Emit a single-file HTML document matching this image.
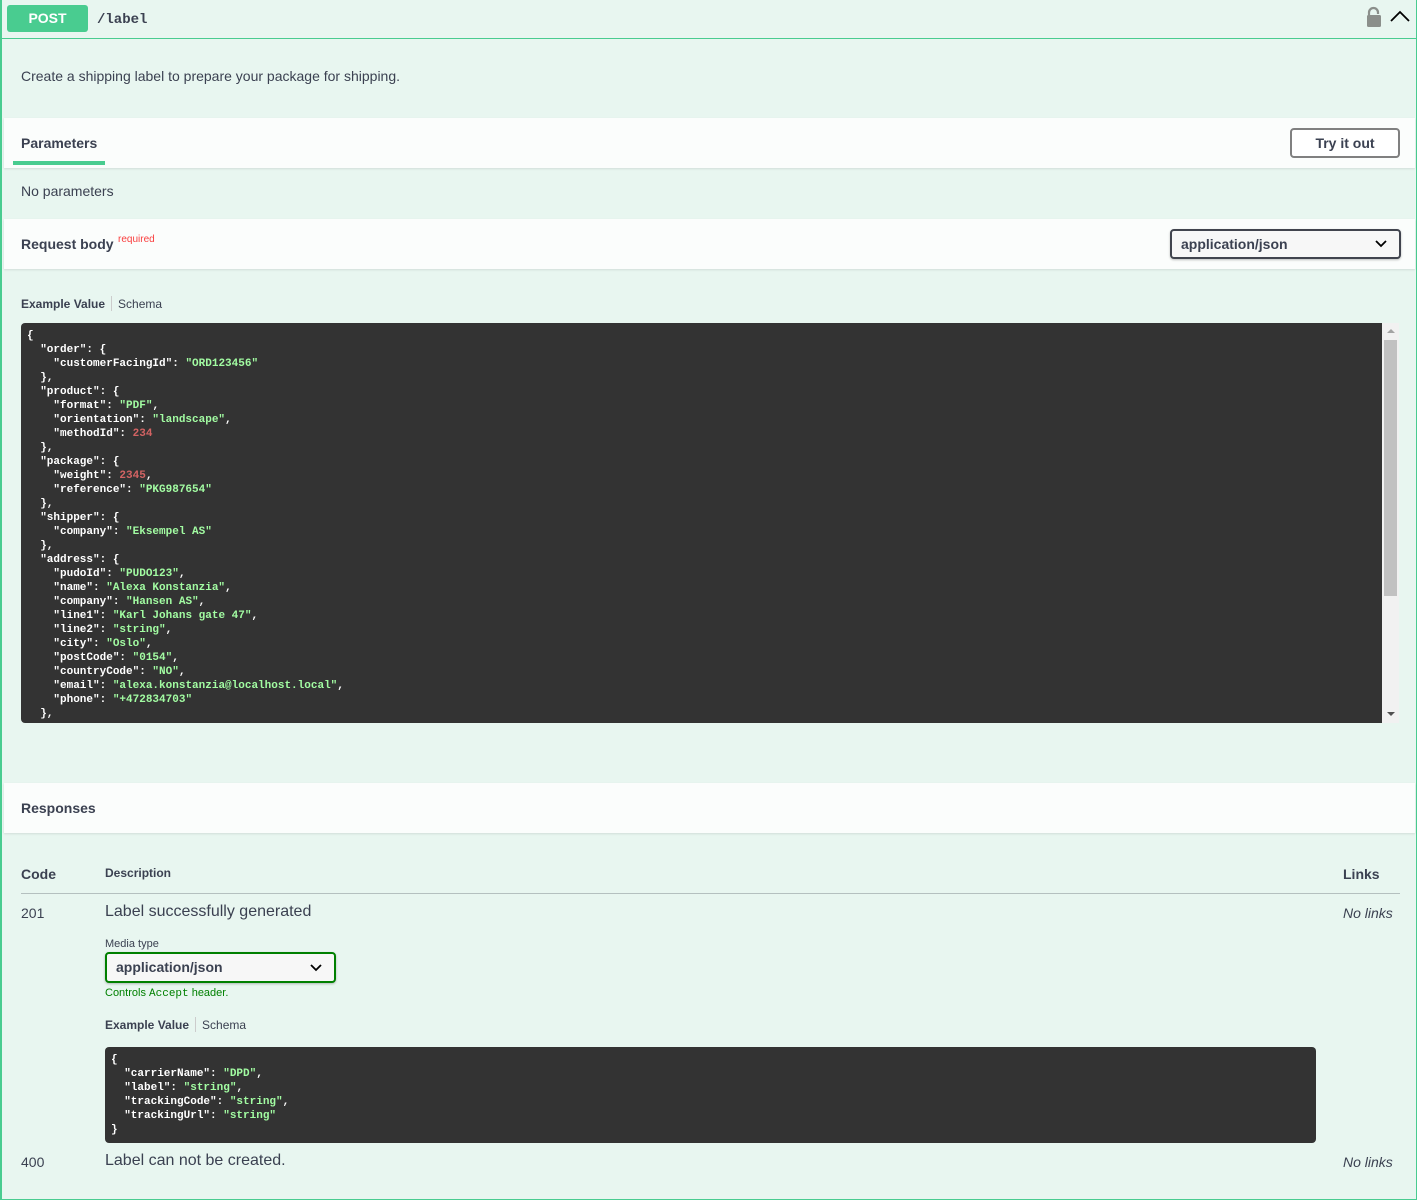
<!DOCTYPE html>
<html><head><meta charset="utf-8"><style>
*{box-sizing:border-box;margin:0;padding:0}
body{width:1417px;height:1200px;background:#fff;font-family:"Liberation Sans",sans-serif;color:#3b4151;position:relative;overflow:hidden}
.op{position:absolute;left:0;top:0;width:1417px;height:1200px;background:#e8f6f0;border:1px solid #49cc90;border-top:none;border-left:2px solid #49cc90}
.a{position:absolute}
.white{position:absolute;left:2px;right:1px;background:#fbfdfc;box-shadow:0 1px 2px rgba(0,0,0,.1)}
.b{font-weight:bold}
pre{font-family:"Liberation Mono",monospace;font-size:11px;line-height:14px;font-weight:bold;color:#fff}
.s{color:#a2fca2}.n{color:#d36363}
.code{position:absolute;background:#333;border-radius:4px;overflow:hidden}
.sel{position:absolute;border:2px solid #41444e;border-radius:4px;background:#f7f7f7;font-weight:bold;font-size:14px;padding-left:9px;box-shadow:0 1px 2px rgba(0,0,0,.25)}
</style></head><body>
<div class="op">
  <div class="a" style="left:0;right:0;top:38px;height:1px;background:#49cc90"></div>
  <div class="a" style="left:5px;top:5px;width:81px;height:27px;background:#49cc90;border-radius:3px;color:#fff;font-weight:bold;font-size:14px;text-align:center;line-height:27px">POST</div>
  <div class="a" style="left:95px;top:12px;font-family:'Liberation Mono',monospace;font-weight:bold;font-size:14px;color:#3b4151">/label</div>
  <svg class="a" style="left:1362px;top:6px" width="20" height="22" viewBox="0 0 20 22"><path d="M5 10V6.5a4.5 4.5 0 0 1 9 0V8" fill="none" stroke="#8b8f8b" stroke-width="2.2"/><rect x="3" y="9" width="14" height="12" rx="1.5" fill="#8b8f8b"/></svg>
  <svg class="a" style="left:1388px;top:10px" width="20" height="14" viewBox="0 0 20 14"><path d="M1 11L10 2l9 9" fill="none" stroke="#000" stroke-width="1.8"/></svg>
  <div class="a" style="left:19px;top:68px;font-size:14px">Create a shipping label to prepare your package for shipping.</div>

  <div class="white" style="top:118px;height:50px"></div>
  <div class="a b" style="left:19px;top:135px;font-size:14px">Parameters</div>
  <div class="a" style="left:11px;top:161px;width:92px;height:4px;background:#49cc90"></div>
  <div class="a b" style="left:1288px;top:128px;width:110px;height:30px;border:2px solid #808080;border-radius:4px;background:#fff;text-align:center;line-height:26px;font-size:14px">Try it out</div>
  <div class="a" style="left:19px;top:183px;font-size:14px">No parameters</div>

  <div class="white" style="top:219px;height:50px"></div>
  <div class="a b" style="left:19px;top:236px;font-size:14px">Request body</div>
  <div class="a" style="left:116px;top:234px;font-size:10px;color:#f93e3e">required</div>
  <div class="sel" style="left:1168px;top:229px;width:231px;height:30px;line-height:26px">application/json<svg style="position:absolute;right:12px;top:9px" width="12" height="8" viewBox="0 0 12 8"><path d="M1 1l5 5 5-5" fill="none" stroke="#000" stroke-width="1.8"/></svg></div>

  <div class="a" style="left:19px;top:296px;font-size:12px"><b>Example Value</b><span style="display:inline-block;width:1px;height:15px;background:#ccc;margin:0 6px;vertical-align:-3px"></span>Schema</div>
  <div class="code" style="left:19px;top:323px;width:1362px;height:400px;border-radius:4px 0 0 4px"><pre style="padding:6px 6px">{
  "order": {
    "customerFacingId": <span class="s">"ORD123456"</span>
  },
  "product": {
    "format": <span class="s">"PDF"</span>,
    "orientation": <span class="s">"landscape"</span>,
    "methodId": <span class="n">234</span>
  },
  "package": {
    "weight": <span class="n">2345</span>,
    "reference": <span class="s">"PKG987654"</span>
  },
  "shipper": {
    "company": <span class="s">"Eksempel AS"</span>
  },
  "address": {
    "pudoId": <span class="s">"PUDO123"</span>,
    "name": <span class="s">"Alexa Konstanzia"</span>,
    "company": <span class="s">"Hansen AS"</span>,
    "line1": <span class="s">"Karl Johans gate 47"</span>,
    "line2": <span class="s">"string"</span>,
    "city": <span class="s">"Oslo"</span>,
    "postCode": <span class="s">"0154"</span>,
    "countryCode": <span class="s">"NO"</span>,
    "email": <span class="s">"alexa.konstanzia@localhost.local"</span>,
    "phone": <span class="s">"+472834703"</span>
  },</pre></div>
  <div class="a" style="left:1380px;top:323px;width:17px;height:400px;background:#f1f1f1"></div>
  <div class="a" style="left:1382px;top:340px;width:13px;height:256px;background:#c1c1c1"></div>
  <div class="a" style="left:1385px;top:329px;width:0;height:0;border-left:4px solid transparent;border-right:4px solid transparent;border-bottom:4px solid #a3a3a3"></div>
  <div class="a" style="left:1385px;top:712px;width:0;height:0;border-left:4px solid transparent;border-right:4px solid transparent;border-top:4px solid #505050"></div>

  <div class="white" style="top:783px;height:50px"></div>
  <div class="a b" style="left:19px;top:800px;font-size:14px">Responses</div>

  <div class="a b" style="left:19px;top:866px;font-size:14px">Code</div>
  <div class="a b" style="left:103px;top:866px;font-size:12px">Description</div>
  <div class="a b" style="left:1341px;top:866px;font-size:14px">Links</div>
  <div class="a" style="left:19px;top:893px;width:1379px;height:1px;background:rgba(59,65,81,.3)"></div>

  <div class="a" style="left:19px;top:905px;font-size:14px">201</div>
  <div class="a" style="left:103px;top:903px;font-size:16px">Label successfully generated</div>
  <div class="a" style="left:1341px;top:905px;font-size:14px;font-style:italic">No links</div>
  <div class="a" style="left:103px;top:938px;font-size:11px">Media type</div>
  <div class="sel" style="left:103px;top:952px;width:231px;height:31px;line-height:27px;border-color:#008000">application/json<svg style="position:absolute;right:12px;top:10px" width="12" height="8" viewBox="0 0 12 8"><path d="M1 1l5 5 5-5" fill="none" stroke="#000" stroke-width="1.8"/></svg></div>
  <div class="a" style="left:103px;top:987px;font-size:11px;color:#008000">Controls <span style="font-family:'Liberation Mono',monospace">Accept</span> header.</div>
  <div class="a" style="left:103px;top:1017px;font-size:12px"><b>Example Value</b><span style="display:inline-block;width:1px;height:15px;background:#ccc;margin:0 6px;vertical-align:-3px"></span>Schema</div>
  <div class="code" style="left:103px;top:1047px;width:1211px;height:96px"><pre style="padding:6px 6px">{
  "carrierName": <span class="s">"DPD"</span>,
  "label": <span class="s">"string"</span>,
  "trackingCode": <span class="s">"string"</span>,
  "trackingUrl": <span class="s">"string"</span>
}</pre></div>

  <div class="a" style="left:19px;top:1154px;font-size:14px">400</div>
  <div class="a" style="left:103px;top:1152px;font-size:16px">Label can not be created.</div>
  <div class="a" style="left:1341px;top:1154px;font-size:14px;font-style:italic">No links</div>
</div>
</body></html>
